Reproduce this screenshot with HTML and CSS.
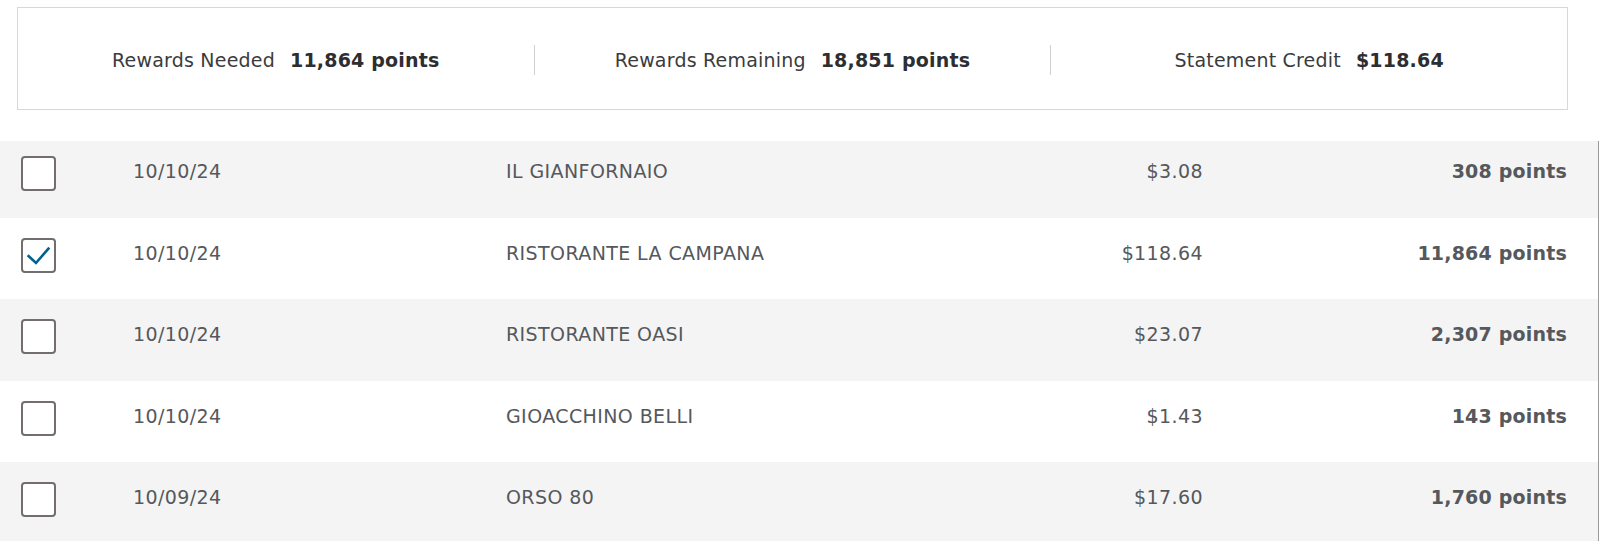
FILE: index.html
```html
<!DOCTYPE html>
<html lang="en">
<head>
    <meta charset="UTF-8">
    <title>Pay with Points</title>
    <link rel="stylesheet" href="styles.css">
</head>
<body>
<div class=summary>
    <div class=summary-item>
        <span class=summary-label>Rewards Needed</span>
        <span class=summary-value>11,864 points</span>
    </div>
    <div class=summary-item>
        <span class=summary-label>Rewards Remaining</span>
        <span class=summary-value>18,851 points</span>
    </div>
    <div class=summary-item>
        <span class=summary-label>Statement Credit</span>
        <span class=summary-value>$118.64</span>
    </div>
</div>

<div class=list>
    <div class=rows>
        <div class=row>
            <span class=checkbox></span>
            <span class=date>10/10/24</span>
            <span class=merchant>IL GIANFORNAIO</span>
            <span class=amount>$3.08</span>
            <span class=points>308 points</span>
        </div>
        <div class=row>
            <span class="checkbox checked">
                <svg viewBox="0 0 31 31" width="31" height="31">
                    <path d="M4.7 15.3 L13 23 L26.3 7.6"/>
                </svg>
            </span>
            <span class=date>10/10/24</span>
            <span class=merchant>RISTORANTE LA CAMPANA</span>
            <span class=amount>$118.64</span>
            <span class=points>11,864 points</span>
        </div>
        <div class=row>
            <span class=checkbox></span>
            <span class=date>10/10/24</span>
            <span class=merchant>RISTORANTE OASI</span>
            <span class=amount>$23.07</span>
            <span class=points>2,307 points</span>
        </div>
        <div class=row>
            <span class=checkbox></span>
            <span class=date>10/10/24</span>
            <span class=merchant>GIOACCHINO BELLI</span>
            <span class=amount>$1.43</span>
            <span class=points>143 points</span>
        </div>
        <div class=row>
            <span class=checkbox></span>
            <span class=date>10/09/24</span>
            <span class=merchant>ORSO 80</span>
            <span class=amount>$17.60</span>
            <span class=points>1,760 points</span>
        </div>
    </div>
</div>
</body>
</html>
```

FILE: styles.css
```css
html {
    font-family: "DejaVu Sans", Verdana, sans-serif;
    font-size: 19px;
}

body {
    margin: 0;
    background: #fff;
}

.summary {
    display: flex;
    align-items: center;
    height: 103px;
    box-sizing: border-box;
    margin: 7px 32px 0 17px;
    padding-top: 3px;
    border: 1px solid #d7d7de;
}

.summary-item {
    flex: 1;
    display: flex;
    justify-content: center;
    align-items: center;
    gap: 15px;
    height: 30px;
    line-height: 30px;
    letter-spacing: 0.2px;

    & + & {
        border-left: 1px solid #cfcfcf;
    }
}

.summary-label {
    color: #3b3b3d;
}

.summary-value {
    color: #2d2e31;
    font-weight: bold;
}

.list {
    margin: 31px 1px 0 0;
    height: 400px;
    overflow: hidden;
    border-right: 1px solid #9a9a9a;
}

/* list is scrolled a few px down */
.rows {
    margin-top: -5px;
}

.row {
    display: grid;
    grid-template-columns: 112px 373px 1fr 205px 364px;
    align-items: start;
    height: 81.5px;
    box-sizing: border-box;
    padding: 20px 31px 0 21px;
    color: #55585c;
    line-height: 30px;
    letter-spacing: 0.4px;

    &:nth-child(odd) {
        background: #f4f4f4;
    }
}

.checkbox {
    display: block;
    width: 35px;
    height: 35px;
    box-sizing: border-box;
    border: 2px solid #736d6d;
    border-radius: 4px;
    background: #fff;

    & svg {
        display: block;
        fill: none;
        stroke: #00628f;
        stroke-width: 2.6;
    }
}

.amount,
.points {
    text-align: right;
}

.points {
    font-weight: bold;
    letter-spacing: 0.2px;
}
```
